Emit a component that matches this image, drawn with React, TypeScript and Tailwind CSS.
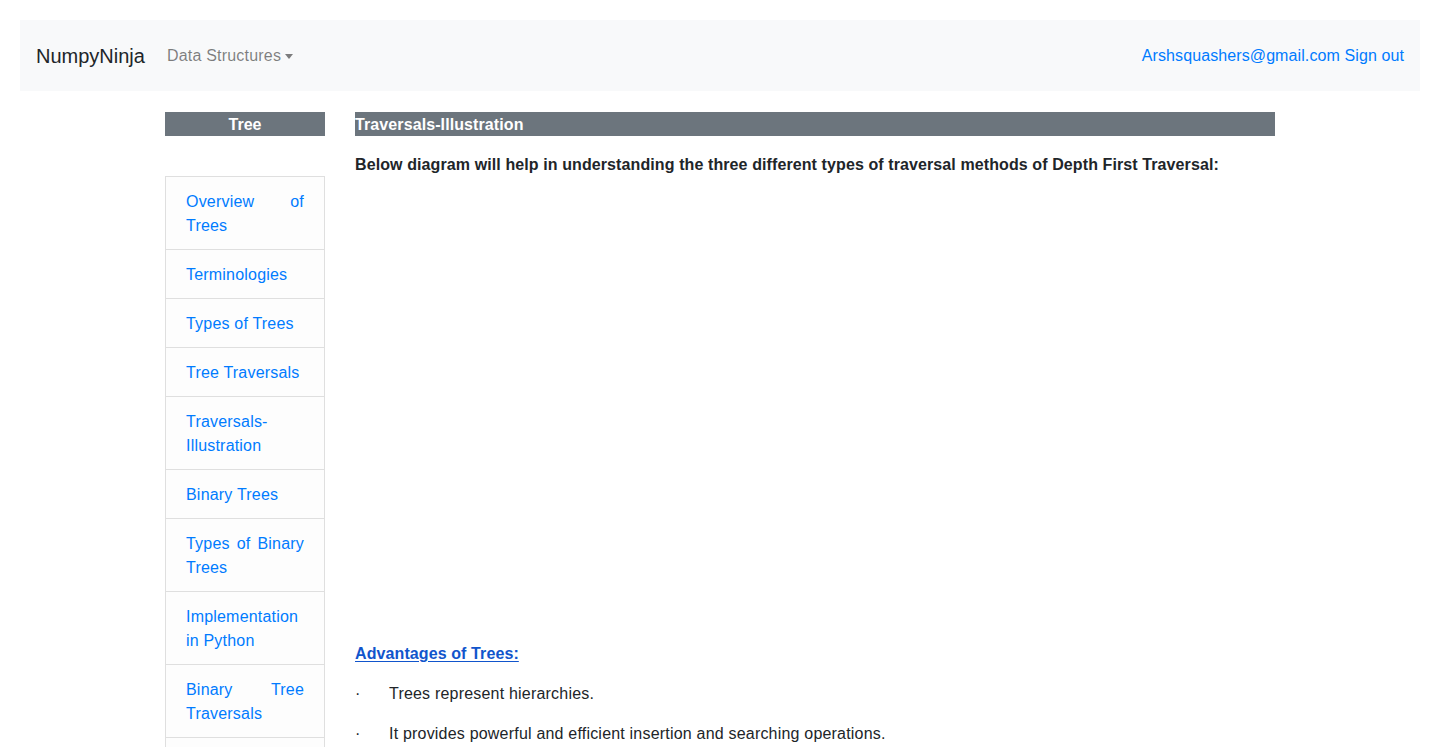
const topics = [
  'Overview of Trees',
  'Terminologies',
  'Types of Trees',
  'Tree Traversals',
  'Traversals-Illustration',
  'Binary Trees',
  'Types of Binary Trees',
  'Implementation in Python',
  'Binary Tree Traversals',
  'Implementation of Binary Trees',
  'Applications of Binary trees',
  'Binary Search Trees',
  'Implementation Of BST'
]

const advantages = [
  'Trees represent hierarchies.',
  'It provides powerful and efficient insertion and searching operations.',
  'Trees are flexible data structures that allow easy movement of subtrees.'
]

function Navbar() {
  return (
    <nav className="mx-5 mt-5 flex h-[71px] items-center justify-between bg-[#f8f9fa] px-4">
      <div className="flex items-center">
        <a href="#" className="mr-[14px] text-[20px] leading-[30px] text-[#212529]">
          NumpyNinja
        </a>
        <a href="#" className="flex items-center px-2 text-base tracking-[0.2px] text-[rgba(0,0,0,0.5)]">
          Data Structures
          <span className="ml-[4px] mt-[2px] h-0 w-0 border-x-[4px] border-t-[5px] border-x-transparent border-t-[rgba(0,0,0,0.5)]" />
        </a>
      </div>
      <div className="text-base tracking-[0.1px] text-[#007bff]">
        <a href="#">Arshsquashers@gmail.com</a> <a href="#">Sign out</a>
      </div>
    </nav>
  )
}

function Sidebar() {
  return (
    <aside className="w-[160px] shrink-0">
      <div className="bg-[#6c757d] pt-px text-center text-base font-semibold leading-[23px] text-white">Tree</div>
      <ul className="mt-10">
        {topics.map((t, i) => (
          <li
            key={t}
            className={`border border-[#dfdfdf] bg-[#fdfdfd] px-5 pb-[11px] pt-[13px] text-justify leading-6 tracking-[0.2px] ${i > 0 ? '-mt-px' : ''}`}
          >
            <a href="#" className="text-[#007bff]">
              {t}
            </a>
          </li>
        ))}
      </ul>
    </aside>
  )
}

export default function App() {
  return (
    <div className="min-h-screen bg-white text-base text-[#212529] [font-family:'Liberation_Sans',Arial,sans-serif]">
      <Navbar />
      <div className="mx-auto mt-[21px] flex w-[1110px] gap-[30px]">
        <Sidebar />
        <main className="w-[920px]">
          <div className="bg-[#6c757d] pt-px text-base font-bold leading-[23px] tracking-[0.1px] text-white">
            Traversals-Illustration
          </div>
          <p className="mt-[17px] font-bold leading-6 tracking-[0.1px]">
            Below diagram will help in understanding the three different types of traversal methods of Depth First
            Traversal:
          </p>
          <div className="h-[465px]" />
          <p className="mb-4 font-bold leading-6 tracking-[0.1px]">
            <a href="#" className="text-[#1155cc] underline underline-offset-2">
              Advantages of Trees:
            </a>
          </p>
          {advantages.map((a) => (
            <p key={a} className="mb-4 flex leading-6 tracking-[0.2px]">
              <span className="w-[34px] shrink-0">·</span>
              <span>{a}</span>
            </p>
          ))}
        </main>
      </div>
    </div>
  )
}
